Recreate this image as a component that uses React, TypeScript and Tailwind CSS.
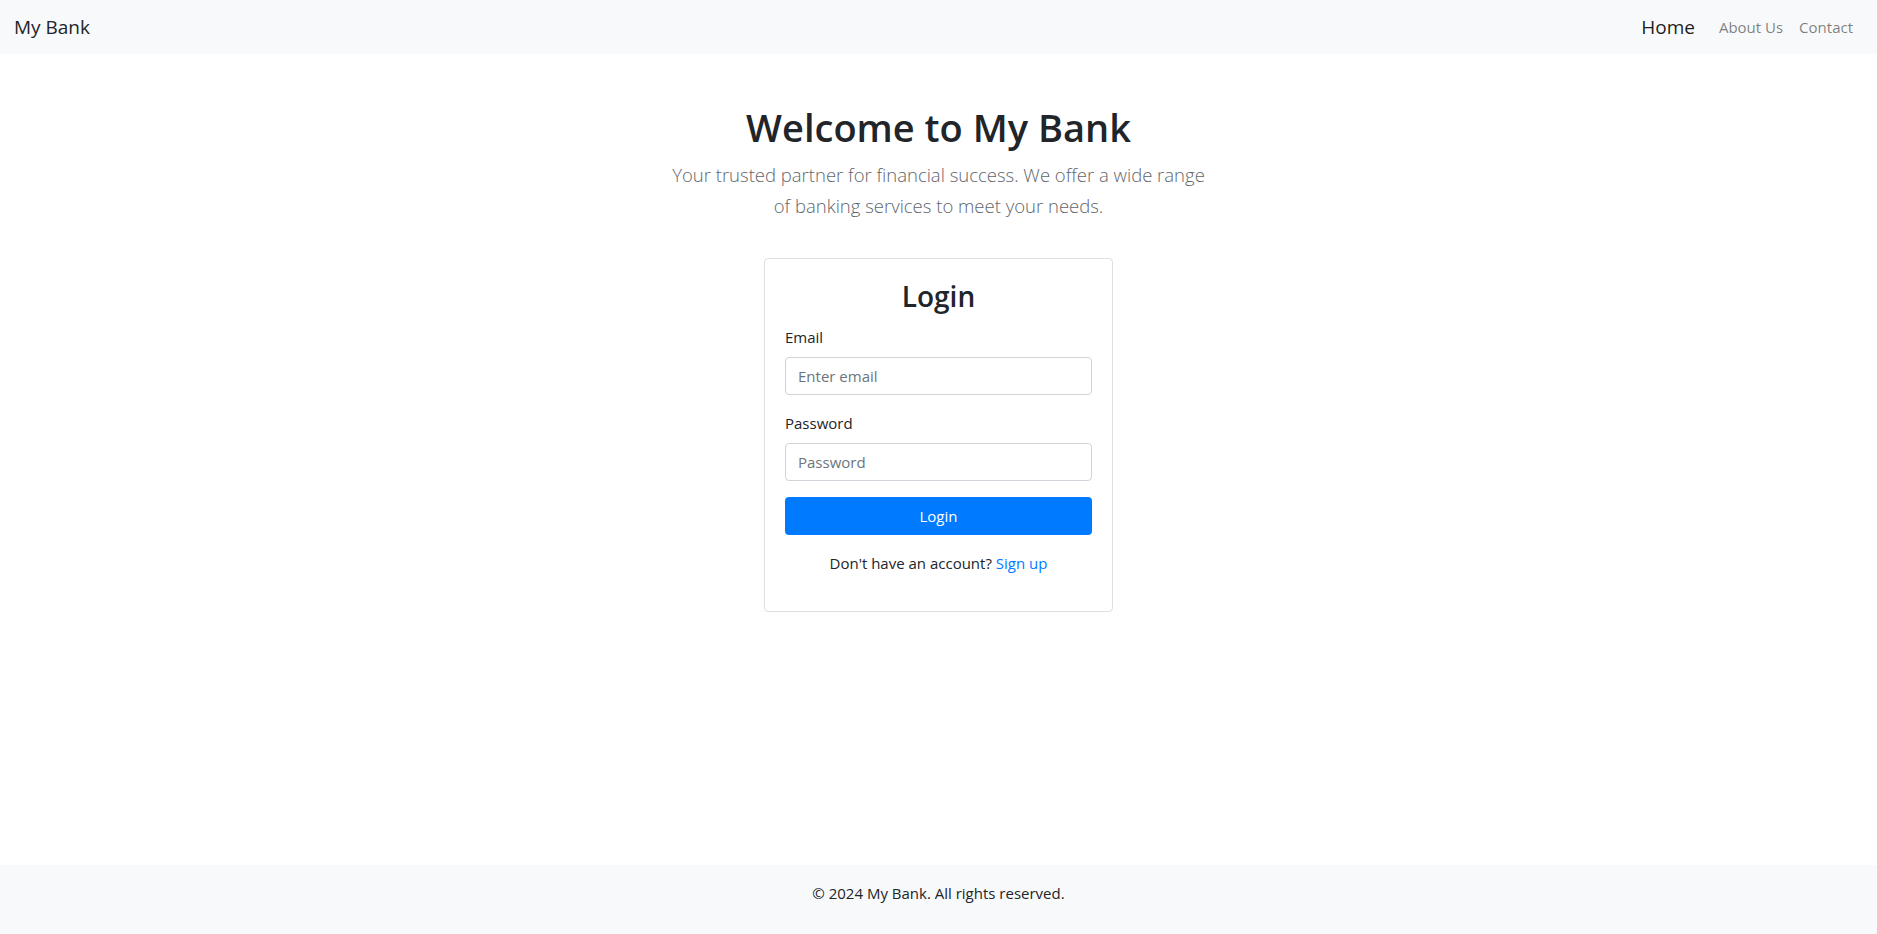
import React from "react";

const navLinks = [
  { name: "Home", active: true },
  { name: "About Us", active: false },
  { name: "Contact", active: false },
];

function Navbar() {
  return (
    <nav className="flex h-[54px] items-center justify-between bg-[#f8f9fa] pl-[14px] pr-4">
      <a href="#" className="text-[19px] leading-[30px] text-[#212529]">
        My Bank
      </a>
      <div className="flex items-center">
        {navLinks.map((link) =>
          link.active ? (
            <a
              key={link.name}
              href="#"
              className="mr-2 px-2 text-[19px] leading-[30px] text-[rgba(0,0,0,0.9)]"
            >
              {link.name}
            </a>
          ) : (
            <a
              key={link.name}
              href="#"
              className="px-2 text-[15px] leading-[24px] text-[rgba(0,0,0,0.5)]"
            >
              {link.name}
            </a>
          )
        )}
      </div>
    </nav>
  );
}

function LoginCard() {
  return (
    <div className="w-[349px] rounded border border-[rgba(0,0,0,0.125)] p-5">
      <h3 className="mb-[13px] pt-[2px] text-center text-[28px] font-semibold leading-[31px] text-[#212529]">
        Login
      </h3>
      <form onSubmit={(e) => e.preventDefault()}>
        <div className="mb-4">
          <label className="mb-2 block text-[15px] leading-[24px] text-[#212529]">
            Email
          </label>
          <input
            type="email"
            placeholder="Enter email"
            className="block h-[38px] w-full rounded border border-[#ced4da] px-3 text-[15px] text-[#495057] placeholder:text-[#6c757d] focus:outline-none"
          />
        </div>
        <div className="mb-4">
          <label className="mb-2 block text-[15px] leading-[24px] text-[#212529]">
            Password
          </label>
          <input
            type="password"
            placeholder="Password"
            className="block h-[38px] w-full rounded border border-[#ced4da] px-3 text-[15px] text-[#495057] placeholder:text-[#6c757d] focus:outline-none"
          />
        </div>
        <button
          type="submit"
          className="block h-[38px] w-full rounded bg-[#007bff] text-[15px] text-white"
        >
          Login
        </button>
      </form>
      <p className="mt-4 mb-4 text-center text-[15px] leading-[24px] text-[#212529]">
        Don't have an account?{" "}
        <a href="#" className="text-[#007bff]">
          Sign up
        </a>
      </p>
    </div>
  );
}

export default function App() {
  return (
    <div
      className="flex min-h-screen flex-col bg-white"
      style={{ fontFamily: '"Open Sans", "Noto Sans", sans-serif' }}
    >
      <Navbar />
      <main className="flex flex-1 flex-col items-center pt-[49px]">
        <h1 className="mb-2 text-center text-[38px] font-semibold leading-[48px] text-[#212529]">
          Welcome to My Bank
        </h1>
        <p className="text-center text-[18.5px] font-light leading-[31px] text-[#5f666d]">
          Your trusted partner for financial success. We offer a wide range
          <br />
          of banking services to meet your needs.
        </p>
        <div className="mt-[37px]">
          <LoginCard />
        </div>
      </main>
      <footer className="h-[69px] bg-[#f8f9fa] pt-4 text-center text-[15px] leading-[24px] text-[#212529]">
        © 2024 My Bank. All rights reserved.
      </footer>
    </div>
  );
}
